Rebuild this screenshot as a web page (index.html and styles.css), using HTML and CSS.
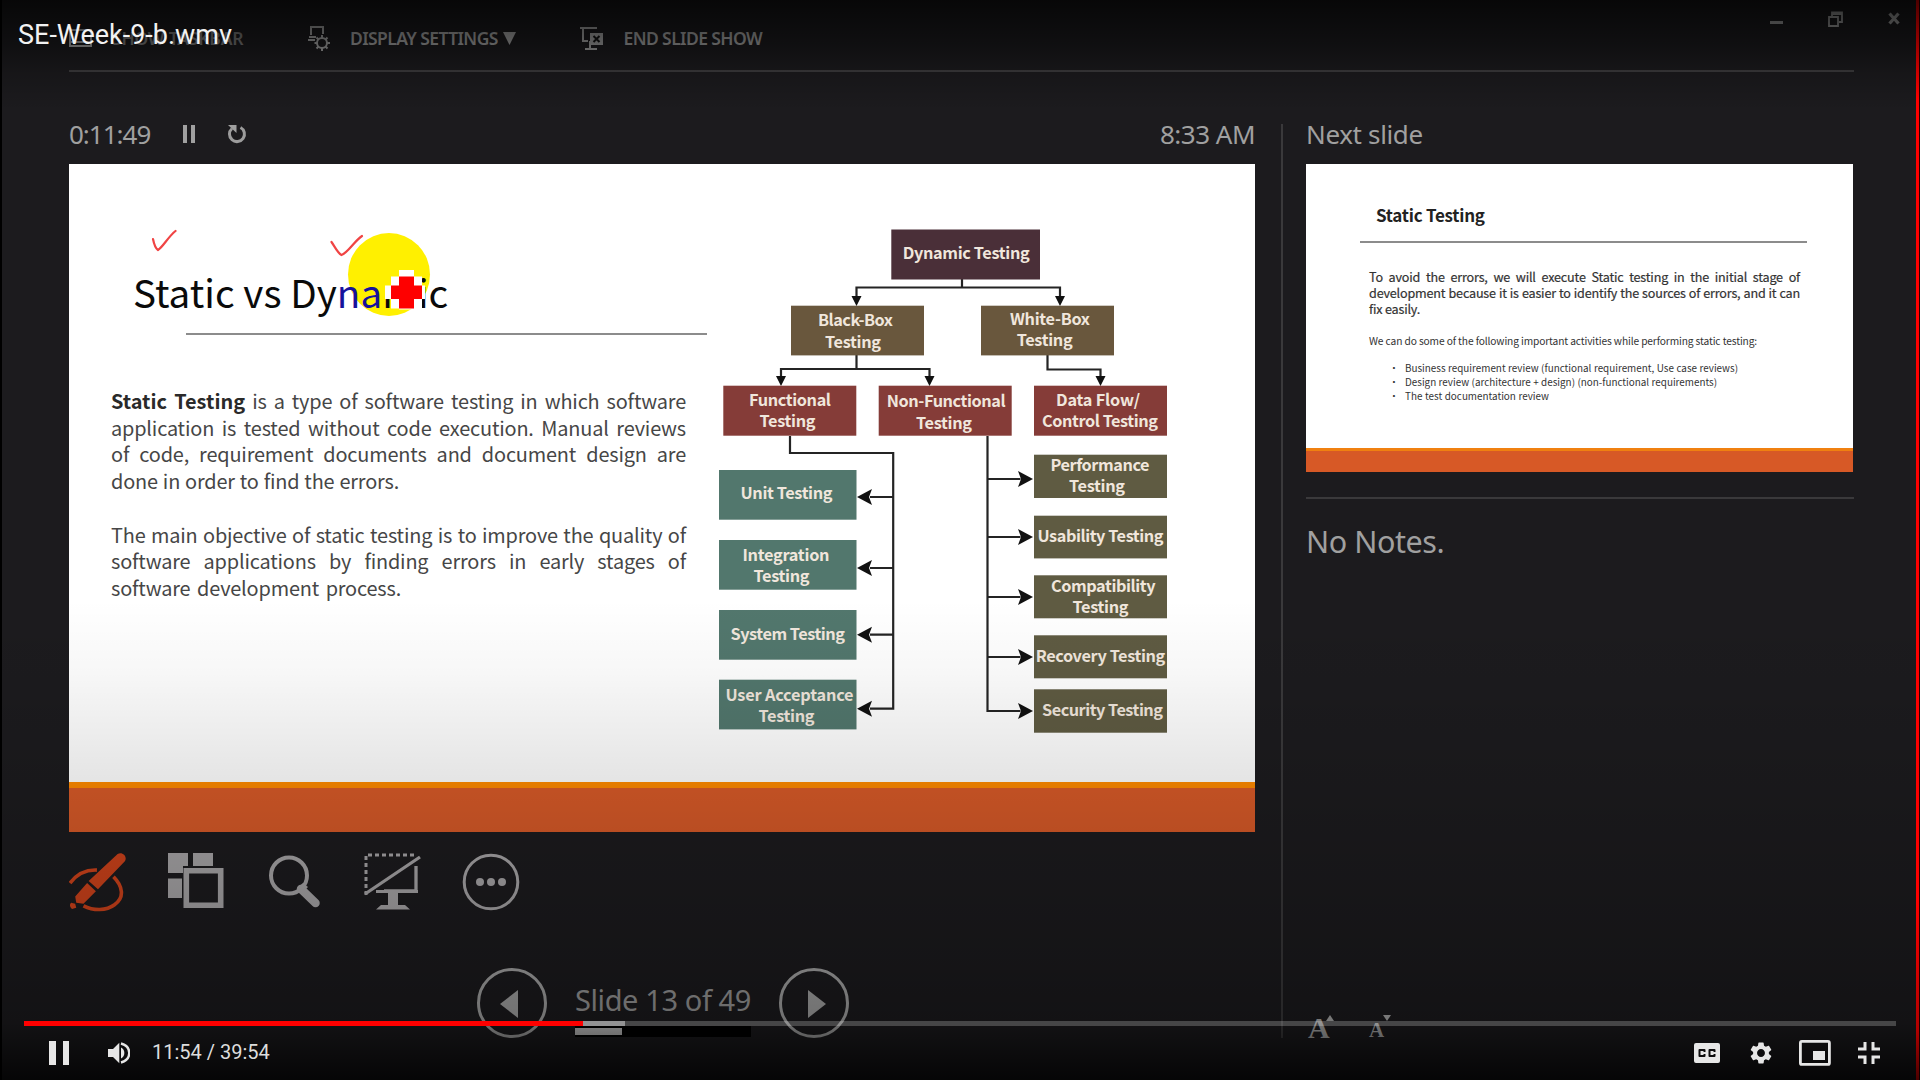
FILE: index.html
```html
<!DOCTYPE html>
<html lang="en">
<head>
<meta charset="utf-8">
<title>SE-Week-9-b.wmv</title>
<link rel="stylesheet" href="styles.css">
</head>
<body>
<div class="player">
  <div class="presenter">
    <header class="topbar">
      <div class="menu-item taskbar">
        <svg width="24" height="18" viewBox="0 0 24 18"><path d="M1 1h21v16H1zM1 13h21" class="line"/></svg>
        <span>SHOW TASKBAR</span>
      </div>
      <div class="menu-item display">
        <svg width="24" height="26" viewBox="0 0 24 26"><path d="M4 10V2h12v7M2 12h7M1 15h7" class="line"/><circle cx="15" cy="18" r="5" class="line"/><path d="M15 10v3M15 23v3M7.500 18h2.500M20 18h3M9.500 12.500l2 2M18.500 21.500l2 2M20.500 12.500l-2 2M11.500 21.500l-2 2" class="line"/></svg>
        <span>DISPLAY SETTINGS</span><svg class="caret" width="14" height="14" viewBox="0 0 14 14"><path d="M0 1h13L6.500 14z"/></svg>
      </div>
      <div class="menu-item end">
        <svg width="24" height="26" viewBox="0 0 24 26"><path d="M0 3h17M3 3v13h5M10 16v7M5 24h12" class="line"/><path d="M10 8h13v12H10z"/><path d="M13.500 11l6 6M19.500 11l-6 6" class="cut"/></svg>
        <span>END SLIDE SHOW</span>
      </div>
      <div class="window-buttons">
        <svg width="13" height="16" viewBox="0 0 13 16"><path d="M0 10h13v3H0z"/></svg>
        <svg width="15" height="16" viewBox="0 0 15 16"><path d="M1 6h9v9H1zM4 5V1.500h10V11h-3M4 3h10" class="line thin"/></svg>
        <svg width="12" height="16" viewBox="0 0 12 16"><path d="M1.500 2.500l9 10M10.500 2.500l-9 10" class="line heavy"/></svg>
      </div>
    </header>

    <main class="columns">
      <section class="current">
        <div class="info">
          <span class="timer">0:11:49</span>
          <svg class="hold" width="12" height="20" viewBox="0 0 12 20"><path d="M0 1h4v18H0zM8 1h4v18H8z"/></svg>
          <svg class="restart" width="20" height="20" viewBox="0 0 20 20"><path d="M13.500 3.500A7.500 7.500 0 1 1 5 4.500" fill="none" stroke="#9c9c9c" stroke-width="3"/><path d="M1 1h8.500v8z"/></svg>
          <span class="clock">8:33 AM</span>
        </div>

        <article class="slide">
          <div class="slide-text">
            <h1>Static vs Dy<span class="lit">na</span>mic</h1>
            <hr>
            <div class="copy">
              <p><b>Static Testing</b> is a type of software testing in which software</p>
              <p>application is tested without code execution. Manual reviews</p>
              <p>of code, requirement documents and document design are</p>
              <p class="w-288">done in order to find the errors.</p>
              <p class="next">The main objective of static testing is to improve the quality of</p>
              <p>software applications by finding errors in early stages of</p>
              <p class="w-290">software development process.</p>
            </div>
          </div>

          <svg class="diagram" width="548" height="618" viewBox="707 164 548 618">
            <g class="links">
              <path d="M962 279v8.500M856.500 298V287.500H1060V298M856.500 355v14M781 378v-9h148.500v9M1047.500 355v14.500h53V378"/>
              <path d="M790 436v17h103.200v255.700H870M893 497h-23M893 568h-23M893 634.700h-23M987.500 436v275h33M987.500 479h33M987.500 537h33M987.500 597h33M987.500 657h33"/>
            </g>
            <g class="heads">
              <path d="M851.500 296h10l-5 10zM1055 296h10l-5 10zM776 376h10l-5 10zM924.500 376h10l-5 10zM1095.500 376h10l-5 10z"/>
              <path d="M857 497l15-8-3 8 3 8zM857 568l15-8-3 8 3 8zM857 634.700l15-8-3 8 3 8zM857 708.700l15-8-3 8 3 8z"/>
              <path d="M1033 479l-15-8 3 8-3 8zM1033 537l-15-8 3 8-3 8zM1033 597l-15-8 3 8-3 8zM1033 657l-15-8 3 8-3 8zM1033 711l-15-8 3 8-3 8z"/>
            </g>
            <rect class="plum" x="891.300" y="229.500" width="148.700" height="50"/>
            <g class="brown"><rect x="791" y="305.700" width="133" height="49.700"/><rect x="981" y="305.700" width="133" height="49.700"/></g>
            <g class="red"><rect x="723.300" y="385.700" width="133" height="50"/><rect x="878.700" y="385.700" width="133" height="50"/><rect x="1034" y="385.700" width="133" height="50"/></g>
            <g class="green"><rect x="719" y="470" width="137.500" height="49.700"/><rect x="719" y="540" width="137.500" height="49.700"/><rect x="719" y="610" width="137.500" height="49.700"/><rect x="719" y="679.700" width="137.500" height="49.700"/></g>
            <g class="olive"><rect x="1034" y="454.700" width="133" height="43.300"/><rect x="1034" y="515.700" width="133" height="42.700"/><rect x="1034" y="575.300" width="133" height="43"/><rect x="1034" y="635.300" width="133" height="43"/><rect x="1034" y="689.300" width="133" height="43.400"/></g>
            <g class="labels">
              <text x="902.700" y="259" textLength="127">Dynamic Testing</text>
              <text x="818" y="325.700" textLength="75">Black-Box</text><text x="825" y="347.500" textLength="56">Testing</text>
              <text x="1010" y="325" textLength="80">White-Box</text><text x="1016.700" y="346" textLength="56">Testing</text>
              <text x="749" y="405.700" textLength="82">Functional</text><text x="759.500" y="427" textLength="56">Testing</text>
              <text x="886.700" y="407" textLength="119">Non-Functional</text><text x="916" y="428.500" textLength="56">Testing</text>
              <text x="1056" y="405.700" textLength="84">Data Flow/</text><text x="1042" y="427" textLength="116">Control Testing</text>
              <text x="740.500" y="499.300" textLength="92">Unit Testing</text>
              <text x="742.500" y="560.700" textLength="87">Integration</text><text x="753.500" y="582.300" textLength="56">Testing</text>
              <text x="730.500" y="640" textLength="114.500">System Testing</text>
              <text x="725.500" y="700.500" textLength="128">User Acceptance</text><text x="758.500" y="721.500" textLength="56">Testing</text>
              <text x="1050.500" y="470.700" textLength="99">Performance</text><text x="1069" y="491.700" textLength="56">Testing</text>
              <text x="1037.500" y="541.500" textLength="126">Usability Testing</text>
              <text x="1051" y="592.300" textLength="104.500">Compatibility</text><text x="1072.500" y="613" textLength="56">Testing</text>
              <text x="1035.700" y="661.500" textLength="129.500">Recovery Testing</text>
              <text x="1042" y="715.500" textLength="121">Security Testing</text>
            </g>
          </svg>

          <svg class="ink" width="320" height="100" viewBox="140 222 320 100">
            <path class="mark" d="M153 239c1 5 2 9 5 11 5-3 10-13 17.500-19M331.500 242c3 4 6 11 10 13 6-2 13-14 20.500-19"/>
            <path fill="#fff" d="M399 270h15v6.500h8v9h3V299h-3v9.500h-8v1h-15v-1h-8v-9.500h-6v-13.500h6v-9h8z"/>
            <path fill="#fe0000" d="M399 276.500h15v9h8V299h-8v9.500h-15V299h-8v-13.500h8z"/>
          </svg>
        </article>

        <div class="tools">
          <svg width="60" height="60" viewBox="1 0 58 58">
            <path class="pen-ring" d="M2 30C9 21 18 17 28 17.500M44 24c9 9 11 20 1 27-8 6-20 6-30 1"/>
            <path class="pen" d="M48 2c4-3 10 2 7 7L29 36l-9-8zM18.500 30l8.500 8L15 50l-7-1-1-6zM3 49l4 1 1 4-4 1c-2-1-3-4-1-6z"/>
          </svg>
          <svg width="60" height="60" viewBox="0 0 60 60"><path d="M1 1h20v13h-5v7H1zM26 1h20v13H26zM1 26.500h14v19.500H1z"/><path class="stroke" d="M19.300 18.800h34.400v34.400H19.300z" stroke-width="5.600"/></svg>
          <svg width="60" height="60" viewBox="-2 0 60 60"><circle class="stroke" cx="22" cy="23.500" r="18" stroke-width="4"/><path class="stroke" d="M34 37l14.500 14" stroke-width="8.500" stroke-linecap="round"/><path d="M31 35l5-4 5 4-5 5z"/></svg>
          <svg width="60" height="60" viewBox="-1 0 60 60"><path class="stroke" d="M2 43V3h51" stroke-width="3" stroke-dasharray="4 3"/><path class="stroke" d="M1 42L56 5M52 14v25H20" stroke-width="3.300"/><path d="M12 38h42v3H34v12h7l5 4.500H12l5-4.500h7V41H12z"/></svg>
          <svg width="60" height="60" viewBox="0 0 60 60"><circle class="stroke" cx="30" cy="30" r="26.800" stroke-width="3"/><circle cx="19" cy="30" r="4"/><circle cx="30" cy="30" r="4"/><circle cx="41" cy="30" r="4"/></svg>
        </div>

        <nav class="pager">
          <svg width="72" height="72" viewBox="0 0 72 72"><circle cx="36" cy="36" r="33.500" fill="none" stroke="#a8a8a8" stroke-width="3"/><path d="M24 37l18-14v28z"/></svg>
          <div class="position"><span>Slide 13 of 49</span><div class="meter"><div class="meter-fill"></div></div></div>
          <svg width="72" height="72" viewBox="0 0 72 72"><circle cx="36" cy="36" r="33.500" fill="none" stroke="#a8a8a8" stroke-width="3"/><path d="M30 23l18 14-18 14z"/></svg>
        </nav>
      </section>

      <aside class="upcoming">
        <div class="info"><span class="next-label">Next slide</span></div>
        <article class="thumb">
          <h2>Static Testing</h2>
          <hr>
          <div class="lead">
            <p>To avoid the errors, we will execute Static testing in the initial stage of</p>
            <p>development because it is easier to identify the sources of errors, and it can</p>
            <p class="short">fix easily.</p>
          </div>
          <p class="intro">We can do some of the following important activities while performing static testing:</p>
          <ul>
            <li class="w-333">Business requirement review (functional requirement, Use case reviews)</li>
            <li class="w-312">Design review (architecture + design) (non-functional requirements)</li>
            <li class="w-144">The test documentation review</li>
          </ul>
        </article>
        <div class="notes">No Notes.</div>
        <div class="font-size">
          <span class="bigger">A</span><svg class="up" width="8" height="6" viewBox="0 0 8 6"><path d="M0 6h8L4 0z"/></svg>
          <span class="smaller">A</span><svg class="down" width="8" height="6" viewBox="0 0 8 6"><path d="M0 0h8L4 6z"/></svg>
        </div>
      </aside>
    </main>
  </div>

  <div class="shade top"></div>
  <div class="shade bottom"></div>
  <div class="edge-left"></div>
  <div class="edge-right"></div>
  <div class="video-title">SE-Week-9-b.wmv</div>

  <div class="controls">
    <div class="progress"><div class="played"></div><div class="loaded"></div></div>
    <div class="buttons">
      <svg class="pause" width="21" height="24" viewBox="0 0 21 24"><path d="M0 0h7v24H0zM14 0h6v24h-6z"/></svg>
      <svg class="volume" width="22" height="22" viewBox="0 0 22 22"><path d="M0 7h5l6.300-6.300v20.600L5 15H0zM13 5.500c4.500 2 4.500 9 0 11z"/><path d="M13 1.500c11 3 11 16 0 19" fill="none" stroke="#e6e6e6" stroke-width="2.400"/></svg>
      <span class="time">11:54 / 39:54</span>
      <svg class="cc" width="26" height="20" viewBox="0 0 26 20"><path fill-rule="evenodd" d="M2 0h22q2 0 2 2v16q0 2-2 2H2q-2 0-2-2V2q0-2 2-2zM5.500 6q-1 0-1 1v6q0 1 1 1h5q1 0 1-1v-2H9.500v1h-3V8h3v1h2V7q0-1-1-1zM15.500 6q-1 0-1 1v6q0 1 1 1h5q1 0 1-1v-2h-2v1h-3V8h3v1h2V7q0-1-1-1z"/></svg>
      <svg class="gear" width="22" height="22" viewBox="2.200 2 19.600 20"><path d="M19.140 12.940c.04-.3.060-.61.060-.94s-.02-.64-.07-.94l2.030-1.580c.18-.14.230-.41.120-.61l-1.920-3.320c-.12-.22-.37-.29-.59-.22l-2.390.96c-.5-.38-1.030-.7-1.620-.94L14.400 2.810c-.04-.24-.24-.41-.48-.41h-3.840c-.24 0-.43.170-.47.410L9.250 5.350c-.59.240-1.130.570-1.620.940l-2.390-.96c-.22-.08-.47 0-.59.220L2.740 8.870c-.12.210-.08.470.120.610l2.030 1.580c-.05.300-.09.630-.09.940s.02.640.070.940l-2.030 1.580c-.18.140-.23.410-.12.610l1.920 3.320c.12.220.37.290.59.220l2.390-.96c.5.380 1.030.700 1.620.940l.36 2.540c.05.240.24.410.48.410h3.840c.24 0 .44-.17.470-.41l.36-2.540c.59-.24 1.130-.56 1.620-.94l2.390.96c.22.080.47 0 .59-.22l1.920-3.320c.12-.22.070-.47-.12-.61l-2.010-1.580zM12 15.600c-1.980 0-3.600-1.620-3.600-3.600s1.620-3.600 3.600-3.600 3.600 1.620 3.600 3.600-1.620 3.600-3.600 3.600z"/></svg>
      <svg class="mini" width="32" height="26" viewBox="0 0 32 26"><rect x="1.400" y="1.400" width="29" height="23" rx="1.500" fill="none" stroke="#e6e6e6" stroke-width="2.800"/><path d="M14 11h12v9H14z"/></svg>
      <svg class="exit" width="22" height="22" viewBox="0 0 22 22"><path d="M5.500 0h3v8.500H0v-3h5.500zM13.500 0h3v5.500H22v3h-8.500zM0 13.500h8.500V22h-3v-5.500H0zM13.500 13.500H22v3h-5.500V22h-3z"/></svg>
    </div>
  </div>
</div>
</body>
</html>
```
FILE: styles.css
```css
* { box-sizing: border-box; }
body { margin: 0; background: #000; overflow: hidden; }
h1, h2, p, ul, hr { margin: 0; padding: 0; }
svg { display: block; flex: none; }

.player { position: relative; width: 1920px; height: 1080px; overflow: hidden; }
.presenter {
  height: 1080px;
  padding: 0 66px 0 69px;
  background: #1c1b1e;
  color: #a0a0a0;
  font-family: "Noto Sans", sans-serif;
}

/* top menu */
.topbar {
  position: relative;
  display: flex;
  align-items: center;
  height: 72px;
  padding-top: 6px;
  border-bottom: 2px solid #3f3e40;
  color: #aaa;
  fill: #aaa;
  font-size: 17.500px;
  font-weight: 600;
  white-space: nowrap;
}
.menu-item { display: flex; align-items: center; height: 26px; }
.menu-item > span { line-height: 26px; }
.menu-item .line, .window-buttons .line { fill: none; stroke: #aaa; stroke-width: 2; }
.menu-item .cut { fill: none; stroke: #151515; stroke-width: 2; }
.taskbar { width: 238px; gap: 19px; letter-spacing: -0.200px; color: #7c7c7c; }
.display { width: 273px; letter-spacing: -0.600px; }
.display > span { margin-left: 19px; }
.caret { margin-left: 5px; }
.end { gap: 19.500px; letter-spacing: -0.600px; }
.window-buttons { position: absolute; top: 11px; right: -46px; display: flex; gap: 45px; }
.window-buttons .thin { stroke-width: 1.800; }
.window-buttons .heavy { stroke-width: 3.200; }

/* two panes */
.columns { display: flex; padding-top: 52px; }
.current { width: 1186px; flex: none; }
.upcoming {
  display: flex;
  flex-direction: column;
  width: 573px;
  height: 914px;
  margin-left: 26px;
  padding-left: 23px;
  border-left: 2px solid #3a393b;
}
.info {
  display: flex;
  height: 40px;
  fill: #a0a0a0;
  font-size: 26px;
  line-height: 20px;
  white-space: nowrap;
}
.timer { width: 114px; letter-spacing: -1px; }
.hold { margin-right: 32px; }
.clock { margin-left: auto; letter-spacing: -0.500px; }
.next-label { letter-spacing: -0.350px; }

/* current slide */
.slide {
  position: relative;
  display: flex;
  height: 668px;
  background: #fff;
  border-bottom: 44px solid #d85a28;
  box-shadow: inset 0 -6px #ff8a00;
}
.slide-text { width: 638px; flex: none; padding-top: 99px; }
.slide h1 {
  position: relative;
  height: 70px;
  padding-left: 64px;
  color: #0a0a0a;
  font: 400 38.600px/56px "Noto Sans CJK SC", sans-serif;
  letter-spacing: 0.020px;
  white-space: nowrap;
  z-index: 1;
}
.slide h1 .lit { color: #17129c; }
.slide h1::before {
  content: "";
  position: absolute;
  left: 278.500px;
  top: -30px;
  width: 82px;
  height: 83px;
  border-radius: 50%;
  background: #fff000;
  z-index: -1;
}
.slide hr { width: 521px; margin-left: 117px; border: 0; border-top: 2px solid #8c8c8c; }
.copy {
  width: 575px;
  margin: 53px 0 0 42px;
  color: #464646;
  font: 400 19.900px/26.700px "Noto Sans CJK SC", sans-serif;
  letter-spacing: -0.170px;
}
.copy p, .thumb p, .thumb li { text-align: justify; text-align-last: justify; white-space: nowrap; }
.copy b { color: #2a2a2a; letter-spacing: 0; }
.copy .next { margin-top: 26.700px; }
.w-288 { width: 288px; }
.w-290 { width: 290px; }
.diagram .links path { fill: none; stroke: #242424; stroke-width: 2.200; }
.diagram .heads { fill: #111; }
.diagram .plum { fill: #4a2f38; }
.diagram .brown { fill: #69573d; }
.diagram .red { fill: #853c38; }
.diagram .green { fill: #52776d; }
.diagram .olive { fill: #5f5b42; }
.diagram .labels { fill: #f0e6dc; font: 700 16.300px "Noto Sans CJK SC", sans-serif; }
.ink { position: absolute; left: 71px; top: 58px; z-index: 2; }
.ink .mark { fill: none; stroke: #f04444; stroke-width: 2.200; stroke-linecap: round; }

/* presenter tools */
.tools { display: flex; gap: 38px; height: 133px; padding-top: 20px; fill: #a8a6a8; }
.tools .stroke { fill: none; stroke: #a8a6a8; }
.tools .pen { fill: #d0431b; }
.tools .pen-ring { fill: none; stroke: #d0431b; stroke-width: 3.500; }
.pager { display: flex; justify-content: center; align-items: flex-start; margin: 2px -2px 0 0; fill: #a8a8a8; }
.position { width: 176px; margin: 11px 27px 0; color: #9c9c9c; font-size: 29px; line-height: 44px; letter-spacing: -0.400px; white-space: nowrap; }
.meter { height: 11px; margin-top: 4px; padding: 2px 0; background: #000; }
.meter-fill { width: 47px; height: 7px; background: #c4c4c4; }

/* next slide pane */
.thumb {
  height: 308px;
  width: 547px;
  padding: 39px 0 0 54px;
  background: #fff;
  border-bottom: 21px solid #d75926;
  box-shadow: inset 0 -3px #f08010;
  color: #333;
  font-family: "Noto Sans CJK SC", sans-serif;
}
.thumb h2 { padding-left: 16px; font-size: 17px; line-height: 24px; letter-spacing: -0.250px; color: #222; }
.thumb hr { width: 447px; margin: 14px 0 26px; border: 0; border-top: 2px solid #8c8c8c; }
.lead { width: 431px; margin-left: 9px; font-size: 12.600px; line-height: 16px; letter-spacing: -0.180px; -webkit-text-stroke: 0.200px #333; }
.lead .short { width: 50px; }
.thumb .intro { width: 388px; margin: 16px 0 0 9px; font-size: 10.200px; line-height: 16px; letter-spacing: -0.120px; }
.thumb ul { margin: 11.500px 0 0 45px; font-size: 9.900px; line-height: 14.200px; list-style: none; }
.thumb li { position: relative; }
.thumb li::before { content: "•"; position: absolute; left: -16px; }
.w-333 { width: 333px; }
.w-312 { width: 312px; }
.w-144 { width: 144px; }
.notes {
  width: 548px;
  margin-top: 25px;
  padding-top: 22px;
  border-top: 2px solid #3a393b;
  font-size: 30.500px;
  line-height: 40px;
  letter-spacing: -0.450px;
}
.font-size {
  display: flex;
  align-items: flex-end;
  margin-top: auto;
  margin-bottom: 1px;
  height: 22px;
  padding-left: 2px;
  color: #b0b0b0;
  fill: #b0b0b0;
  font-family: "Liberation Serif", serif;
  font-weight: 700;
}
.bigger { width: 18px; font-size: 30px; line-height: 19px; }
.smaller { width: 14px; margin-left: 35px; font-size: 21px; line-height: 14px; }
.up, .down { align-self: flex-start; }

/* video overlay */
.shade { position: absolute; left: 0; width: 1920px; }
.shade.top { top: 0; height: 110px; background: linear-gradient(rgba(0,0,0,.74), rgba(0,0,0,.45) 40%, rgba(0,0,0,.2) 66%, rgba(0,0,0,0)); }
.shade.bottom {
  bottom: 0;
  height: 480px;
  background: linear-gradient(rgba(0,0,0,0), rgba(0,0,0,.03) 15%, rgba(0,0,0,.1) 37%, rgba(0,0,0,.15) 50%, rgba(0,0,0,.25) 75%, rgba(0,0,0,.33) 88%, rgba(0,0,0,.6) 95%, rgba(0,0,0,.8));
}
.edge-left { position: absolute; left: 0; top: 0; width: 2px; height: 1080px; background: #000; }
.edge-right {
  position: absolute; right: 0; top: 0; width: 4px; height: 1080px;
  background: linear-gradient(rgba(0,0,0,.7), transparent 100px, transparent 900px, rgba(0,0,0,.3) 1030px, rgba(0,0,0,.7)), linear-gradient(90deg, #f00 3px, #200 3px);
}
.video-title { position: absolute; left: 18px; top: 19px; color: #f2f2f2; font: 27px/32px Roboto, sans-serif; white-space: nowrap; }
.controls { position: absolute; left: 24px; bottom: 0; width: 1872px; height: 59px; }
.progress { display: flex; height: 5px; background: rgba(255,255,255,.22); }
.played { width: 559px; background: #f00; }
.loaded { width: 42px; background: rgba(255,255,255,.42); }
.buttons { display: flex; align-items: center; height: 54px; padding: 0 16px 0 25px; fill: #e6e6e6; }
.volume { margin-left: 38px; }
.time { margin: -2px 0 0 22px; color: #ddd; font: 20px/24px Roboto, sans-serif; white-space: nowrap; }
.cc { margin-left: auto; }
.gear { margin-left: 30px; }
.mini { margin-left: 27px; }
.exit { margin-left: 27px; }
```
